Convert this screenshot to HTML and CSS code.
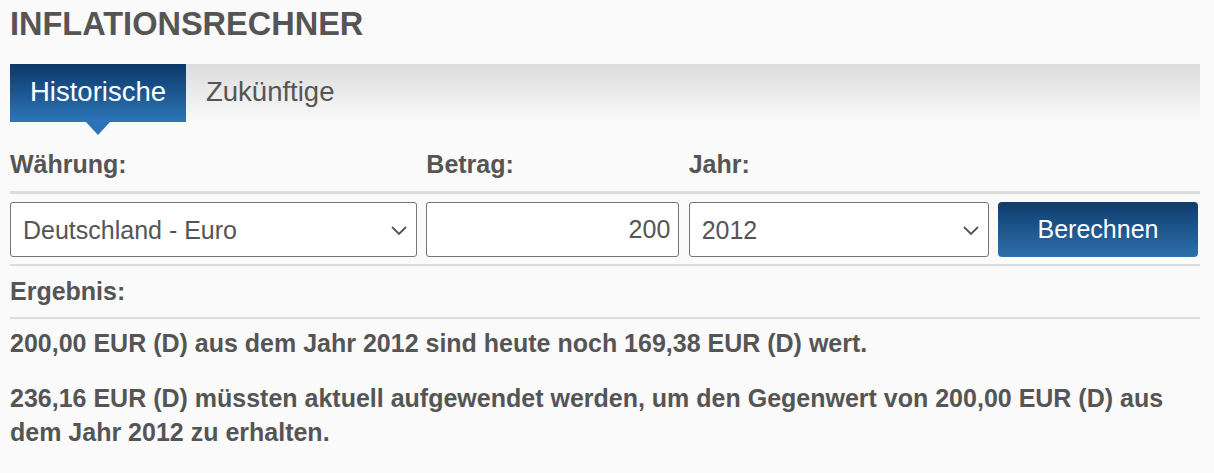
FILE: index.html
```html
<!DOCTYPE html>
<html lang="de">
<head>
<meta charset="utf-8">
<title>Inflationsrechner</title>
<link rel="stylesheet" href="styles.css">
</head>
<body>
<div class="page">
  <h1 class="title">INFLATIONSRECHNER</h1>
  <div class="tabs">
    <div class="tab tab-active">Historische</div>
    <div class="tab">Zukünftige</div>
  </div>
  <div class="row labels">
    <div class="label">Währung:</div>
    <div class="label">Betrag:</div>
    <div class="label">Jahr:</div>
    <div></div>
  </div>
  <div class="row controls">
    <div class="select-wrap">
      <select class="field select"><option>Deutschland - Euro</option></select>
      <svg class="chev" width="16" height="9" viewBox="0 0 16 9"><path d="M1 1 L8 8 L15 1" fill="none" stroke="#555" stroke-width="1.8"/></svg>
    </div>
    <input class="field input" type="text" value="200">
    <div class="select-wrap">
      <select class="field select"><option>2012</option></select>
      <svg class="chev" width="16" height="9" viewBox="0 0 16 9"><path d="M1 1 L8 8 L15 1" fill="none" stroke="#555" stroke-width="1.8"/></svg>
    </div>
    <button class="btn">Berechnen</button>
  </div>
  <div class="result-head">Ergebnis:</div>
  <p class="result">200,00 EUR (D) aus dem Jahr 2012 sind heute noch 169,38 EUR (D) wert.</p>
  <p class="result second">236,16 EUR (D) müssten aktuell aufgewendet werden, um den Gegenwert von 200,00 EUR (D) aus dem Jahr 2012 zu erhalten.</p>
</div>
</body>
</html>
```
FILE: styles.css
```css
html, body {
  margin: 0;
  padding: 0;
  background: #fafafa;
}
body {
  font-family: "Liberation Sans", Arial, sans-serif;
  color: #555555;
}
.page {
  width: 1190px;
  margin-left: 10px;
  padding-top: 4px;
}
.title {
  margin: 0 0 20px 0;
  font-size: 32.5px;
  line-height: 40px;
  font-weight: bold;
  color: #555555;
}
.tabs {
  display: flex;
  height: 58px;
  background: linear-gradient(#dcdcdc, #fafafa);
}
.tab {
  position: relative;
  height: 58px;
  line-height: 55px;
  padding: 0 20px;
  font-size: 27.5px;
  color: #555555;
}
.tab-active {
  color: #ffffff;
  background: linear-gradient(#0c3868, #2c76b9);
}
.tab-active::after {
  content: "";
  position: absolute;
  left: 50%;
  top: 58px;
  margin-left: -12px;
  border-left: 12px solid transparent;
  border-right: 12px solid transparent;
  border-top: 13px solid #2b73b4;
}
.row {
  display: grid;
  grid-template-columns: 407px 253px 300px 200px;
  column-gap: 9.33px;
}
.labels {
  padding: 27px 0 12px 0;
  border-bottom: 3px solid #dddddd;
}
.label {
  font-size: 25px;
  line-height: 30px;
  font-weight: bold;
}
.controls {
  padding: 8px 0 7px 0;
  border-bottom: 2px solid #dddddd;
}
.field {
  box-sizing: border-box;
  width: 100%;
  height: 55px;
  margin: 0;
  border: 1px solid #767676;
  border-radius: 3px;
  background: #ffffff;
  font-family: "Liberation Sans", Arial, sans-serif;
  font-size: 25px;
  color: #555555;
  outline: none;
}
.select-wrap {
  position: relative;
}
.select {
  appearance: none;
  -webkit-appearance: none;
  padding: 0 40px 0 12px;
}
.chev {
  position: absolute;
  right: 10px;
  top: 24px;
  pointer-events: none;
}
.input {
  text-align: right;
  padding: 0 8px 0 8px;
}
.btn {
  box-sizing: border-box;
  height: 55px;
  width: 200px;
  border: none;
  border-radius: 4px;
  background: linear-gradient(#0e3c6c, #2e70ab);
  color: #ffffff;
  font-family: "Liberation Sans", Arial, sans-serif;
  font-size: 25px;
  padding: 0;
}
.result-head {
  padding: 10px 0 11px 0;
  font-size: 25px;
  line-height: 30px;
  font-weight: bold;
  border-bottom: 2px solid #dddddd;
}
.result {
  margin: 7px 0 0 0;
  font-size: 25px;
  line-height: 34px;
  font-weight: bold;
}
.result.second {
  margin-top: 21px;
}
```
